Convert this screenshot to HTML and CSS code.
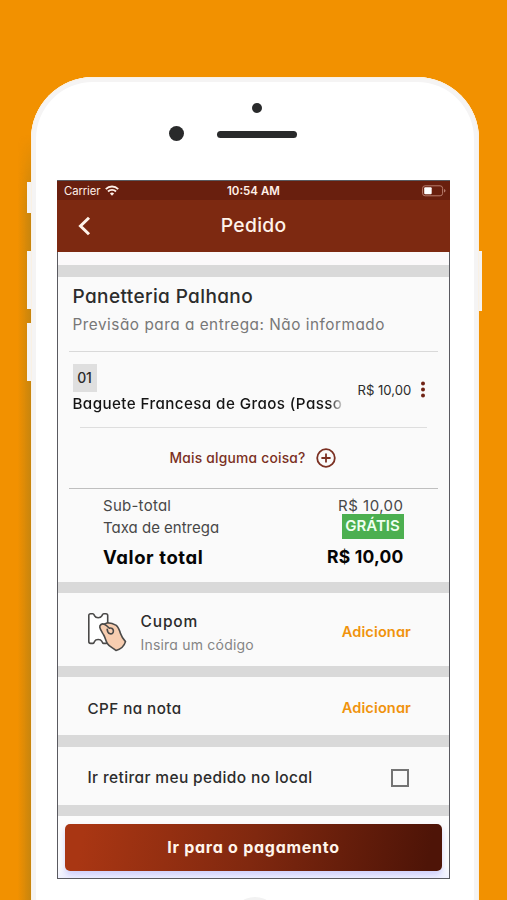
FILE: index.html
```html
<!DOCTYPE html>
<html lang="pt-BR">
<head>
<meta charset="utf-8">
<title>Pedido</title>
<link rel="stylesheet" href="styles.css">
</head>
<body>
<div class="stage">
  <i class="side-shadow"></i>
  <i class="side-button mute"></i>
  <i class="side-button vol-up"></i>
  <i class="side-button vol-down"></i>
  <i class="side-button power"></i>
  <div class="phone">
    <div class="phone-top">
      <i class="sensor"></i>
      <i class="camera"></i>
      <i class="speaker"></i>
    </div>
    <main class="screen">
      <div class="status">
        <div class="carrier"><span>Carrier</span>
          <svg width="14" height="11" viewBox="0 0 14 11" fill="none" stroke="#fff0e8" stroke-width="1.9"><path d="M.8 4.1a8.8 8.8 0 0 1 12.4 0M3 6.5a5.7 5.7 0 0 1 8 0"/><path d="M7 10.8 4.9 8.6a3 3 0 0 1 4.2 0z" fill="#fff0e8" stroke="none"/></svg>
        </div>
        <span class="time">10:54 AM</span>
        <svg class="battery" width="24" height="12" viewBox="0 0 24 12"><rect x=".6" y=".8" width="20" height="10" rx="2.5" fill="none" stroke="#b77c6d" stroke-width="1"/><rect x="2.2" y="2.3" width="7.500" height="7" rx="1" fill="#fff"/><path d="M22 4v3.6q1.5-.6 1.5-1.8T22 4z" fill="#b77c6d"/></svg>
      </div>
      <header class="header">
        <svg class="back" width="14" height="20" viewBox="0 0 14 20" fill="none" stroke="#fff3ea" stroke-width="3"><path d="M12 1.700 3.500 10l8.500 8.300"/></svg>
        <h1>Pedido</h1>
      </header>
      <div class="gap-light"></div>
      <div class="band band-12"></div>
      <section class="order">
        <h2>Panetteria Palhano</h2>
        <p class="eta">Previsão para a entrega: Não informado</p>
        <div class="item">
          <div class="item-main">
            <span class="qty">01</span>
            <div class="item-name">Baguete Francesa de Graos (Passo</div>
          </div>
          <span class="item-price">R$ 10,00</span>
          <svg width="6" height="17" viewBox="0 0 6 17" fill="#702315"><circle cx="3" cy="2.4" r="2"/><circle cx="3" cy="8.4" r="2"/><circle cx="3" cy="14.4" r="2"/></svg>
        </div>
        <div class="more"><span>Mais alguma coisa?</span>
          <svg width="20" height="20" viewBox="0 0 20 20" fill="none" stroke="#7b3022" stroke-width="1.8"><circle cx="10" cy="10" r="8.8"/><path d="M10 5.4v9.2M5.4 10h9.2"/></svg>
        </div>
        <div class="totals">
          <div class="line"><span class="sub-label">Sub-total</span><span class="sub-value">R$ 10,00</span></div>
          <div class="line"><span class="fee-label">Taxa de entrega</span><span class="free">GRÁTIS</span></div>
          <div class="line total"><span class="total-label">Valor total</span><span class="total-value">R$ 10,00</span></div>
        </div>
      </section>
      <div class="band"></div>
      <section class="row coupon">
        <svg class="coupon-icon" width="42" height="42" viewBox="0 0 42 42" stroke="#4a4948" stroke-width="1.6" stroke-linejoin="round" stroke-linecap="round">
          <path fill="#fff" d="M3.600 2.800h2.200c1.200 0 1.100 1 1.800 2 1.300 2.500 5.800 2.500 7.300 0 .7-1 .5-2 1.800-2h2.200c1.200 0 1.800.6 1.800 1.800v26c0 1.200-.6 1.800-1.800 1.800h-2.200c-1.200 0-1.100-1-1.800-2-1.500-2.500-6-2.500-7.300 0-.7 1-.6 2-1.800 2H3.600c-1.200 0-1.800-.6-1.800-1.800v-26c0-1.200.6-1.800 1.800-1.800z"/>
          <path fill="#f7cdb0" d="M20.600 11.800c3 .2 6.200 1.200 8.700 2.600 2.400 2.200 3.300 5 4.200 8.200 1 3.200 2.700 5.400 5 8-1.300 4.500-4.800 7.600-9.500 8.900-2.600-2.600-6.600-3.600-8.700-7-1.700-2.700-2-5.800-3.600-8.500-1.300-2.300-3.400-5-3.900-7.600-.5-2.400 2.200-4.300 4.400-3.200z"/>
          <path fill="none" d="M17.200 13.200c2 .6 3.600 2.300 5.200 4 2-.6 3.900.6 4 2.700.1 2-1.500 3.400-3.300 2.900-2-.6-2.800-2.700-2.900-4.600"/>
        </svg>
        <div class="coupon-text">
          <h3>Cupom</h3>
          <p>Insira um código</p>
        </div>
        <a class="add">Adicionar</a>
      </section>
      <div class="band"></div>
      <section class="row cpf"><span class="cpf-label">CPF na nota</span><a class="add">Adicionar</a></section>
      <div class="band band-12"></div>
      <section class="row pickup"><span class="pickup-label">Ir retirar meu pedido no local</span><i class="check"></i></section>
      <div class="band"></div>
      <footer class="footer"><div class="pay">Ir para o pagamento</div></footer>
    </main>
    <i class="home"></i>
  </div>
</div>
</body>
</html>
```
FILE: styles.css
```css
* { box-sizing: border-box; margin: 0; }

body {
  height: 900px;
  overflow: hidden;
  background: #f29100;
  font-family: Inter, "Liberation Sans", sans-serif;
  font-feature-settings: "cv11";
  color: #2c2c2c;
}

i { display: block; }
h1, h2, h3 { font-weight: 500; }
svg { display: block; flex: none; }
span, p, h1, h2, h3, a { white-space: nowrap; }

.stage {
  position: relative;
  height: 900px;
  padding: 77px 28.500px 0 30.500px;
  overflow: hidden;
}

.side-shadow {
  position: absolute;
  left: 18px;
  top: 135px;
  width: 14px;
  height: 775px;
  background: linear-gradient(90deg, rgba(150, 120, 30, 0), rgba(150, 120, 30, 0.5));
  -webkit-mask-image: linear-gradient(transparent, #000 70px);
}

.side-button {
  position: absolute;
  left: 26.500px;
  width: 10px;
  background: #f5f3f1;
}
.mute { top: 182px; height: 31px; }
.vol-up { top: 251px; height: 58px; }
.vol-down { top: 323px; height: 58px; }
.power { left: 472px; top: 251px; height: 60px; }

.phone {
  position: relative;
  height: 880px;
  padding: 0 28.500px 0 26.500px;
  border-radius: 62px;
  background: #fff;
  box-shadow: inset 0 0 0 1px #faf1e4, inset 0 0 0 5px #f5f4f4;
}

.phone-top { position: relative; height: 103px; }
.sensor, .camera, .speaker { position: absolute; background: #292a2b; border-radius: 8px; }
.sensor { left: 194.500px; top: 26px; width: 10px; height: 10px; }
.camera { left: 112px; top: 49px; width: 15px; height: 15px; }
.speaker { left: 159.500px; top: 54px; width: 80px; height: 7px; }

.screen {
  display: flex;
  flex-direction: column;
  height: 699px;
  border: 1px solid #5a5a60;
  background: #fafafa;
}

.status {
  display: flex;
  align-items: center;
  height: 19px;
  margin: 0 -1px;
  padding: 0 4px 0 7px;
  background: #691f0e;
  color: #fff0e8;
}
.carrier {
  display: flex;
  align-items: center;
  gap: 5px;
  width: 163px;
  font-size: 11.300px;
  letter-spacing: -0.1px;
  font-feature-settings: normal;
}
.time { font-size: 11.500px; font-weight: 600; }
.battery { margin-left: auto; }

.header {
  display: flex;
  align-items: center;
  height: 52px;
  margin: 0 -1px;
  padding: 0 163.500px 0 20px;
  justify-content: space-between;
  background: #7d2911;
  color: #fff3ea;
}
.header h1 { font-size: 19.300px; letter-spacing: 0.300px; padding-bottom: 2px; }

.gap-light { height: 13px; background: #fbf9fa; }
.band { flex: none; height: 11px; background: #d9d9d9; }
.band-12 { height: 12px; }

.order { height: 305px; padding: 0 11px; }
.order h2 {
  height: 38px;
  padding-left: 3.500px;
  font-size: 19px;
  line-height: 39px;
  font-weight: 450;
  letter-spacing: 0.380px;
}
.eta {
  height: 37px;
  padding-left: 3.500px;
  border-bottom: 1px solid #d9d9d9;
  font-size: 15.300px;
  line-height: 20px;
  letter-spacing: 0.530px;
  color: #777;
}

.item {
  display: flex;
  align-items: center;
  height: 76px;
  margin: 0 11px;
  border-bottom: 1px solid #dedede;
}
.item-main { width: 278px; height: 52px; margin: 0 7px 0 -7.500px; }
.qty {
  display: block;
  width: 24px;
  height: 28px;
  background: #dfdfdf;
  font-size: 14px;
  line-height: 28px;
  font-weight: 500;
  letter-spacing: -0.200px;
  text-align: center;
}
.item-name {
  height: 24px;
  white-space: nowrap;
  font-size: 15.200px;
  line-height: 24px;
  font-weight: 500;
  letter-spacing: 0.400px;
  color: #151515;
  -webkit-mask-image: linear-gradient(90deg, #000 256px, transparent 272px);
}
.item-price { width: 62px; font-size: 13.100px; }

.more {
  display: flex;
  align-items: center;
  justify-content: center;
  gap: 10px;
  height: 61px;
  padding: 0 2px 1px 0;
  border-bottom: 1px solid #bfbfbf;
  font-size: 13.800px;
  font-weight: 450;
  letter-spacing: 0.230px;
  color: #7b3022;
}

.totals { padding: 5px 34.500px 0 34px; }
.line {
  display: flex;
  align-items: center;
  justify-content: space-between;
  height: 22px;
  font-size: 15px;
  color: #484848;
}
.sub-label { letter-spacing: 0.260px; }
.sub-value { letter-spacing: 0.480px; }
.free {
  width: 62px;
  height: 25px;
  margin-top: -1px;
  background: #4caf50;
  color: #effff0;
  font-size: 15px;
  line-height: 24px;
  font-weight: 600;
  text-align: center;
}
.total { height: 37px; font-weight: 700; color: #050505; }
.total-label { font-size: 18.500px; letter-spacing: 0.600px; }
.total-value { font-size: 17.500px; letter-spacing: 0.200px; }

.row {
  display: flex;
  align-items: center;
  justify-content: space-between;
  height: 58px;
  padding: 0 38px 0 29.500px;
  font-size: 15.200px;
  font-weight: 450;
}
.row.coupon { height: 73px; }
.coupon-icon { margin: 4px 12px 0 -1px; }
.coupon-text { flex: 1; }
.coupon h3 { font-size: 15.500px; line-height: 23px; letter-spacing: 0.850px; padding-top: 6px; }
.coupon p { font-size: 14px; line-height: 23px; font-weight: 400; letter-spacing: 0.200px; color: #858585; }
.add { margin-top: 4px; font-size: 14.600px; font-weight: 600; letter-spacing: 0.100px; color: #f0930c; }
.cpf-label { margin-top: 4px; letter-spacing: 0.450px; }
.pickup-label { margin-top: 3px; font-size: 15.500px; letter-spacing: 0.370px; }
.check { width: 18px; height: 18px; margin: 4px 2px 0 0; border: 2px solid #747474; }

.footer {
  height: 62px;
  padding: 7.500px 7px 0;
  background: linear-gradient(#fcfcfc 50px, #f0f1ff);
  overflow: hidden;
}
.pay {
  height: 47px;
  border-radius: 5px;
  background: linear-gradient(100deg, #a93613 5%, #80280f 50%, #4e1407 96%);
  box-shadow: 0 4px 6px rgba(90, 90, 250, 0.25);
  color: #fff5ec;
  font-size: 16px;
  line-height: 46px;
  font-weight: 700;
  letter-spacing: 0.740px;
  text-align: center;
}

.home {
  width: 48px;
  height: 48px;
  margin: 18px 0 0 174px;
  border-radius: 50%;
  background: #f2f2f2;
}
```
